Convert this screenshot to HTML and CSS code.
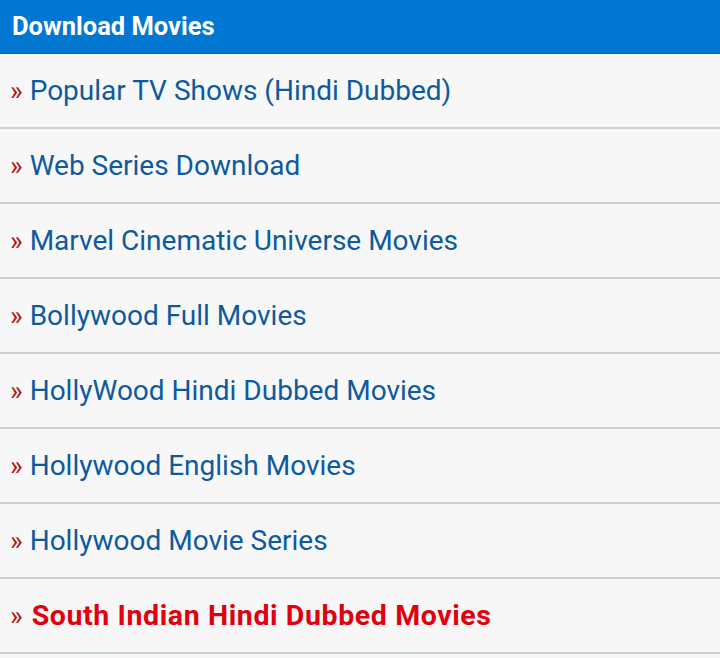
FILE: index.html
```html
<!DOCTYPE html>
<html>
    <head>
        <title>Download Movies</title>
        <meta charset="utf-8" />
        <meta name="viewport" content="width=device-width, initial-scale=1.0">
        <link rel="stylesheet" href="styles.css">
    </head>
    <body>
        <div class="widget">
            <h2 class="widget-title">Download Movies</h2>
            <ul class="cat-list">
                <li><a href="#">Popular TV Shows (Hindi Dubbed)</a></li>
                <li><a href="#">Web Series Download</a></li>
                <li><a href="#">Marvel Cinematic Universe Movies</a></li>
                <li><a href="#">Bollywood Full Movies</a></li>
                <li><a href="#">HollyWood Hindi Dubbed Movies</a></li>
                <li><a href="#">Hollywood English Movies</a></li>
                <li><a href="#">Hollywood Movie Series</a></li>
                <li class="hot"><a href="#">South Indian Hindi Dubbed Movies</a></li>
            </ul>
        </div>
    </body>
</html>
```

FILE: styles.css
```css
body {
    margin: 0;
    font-family: "Roboto", "Liberation Sans", sans-serif;
    background: #f7f7f7;
}

.widget-title {
    margin: 0;
    height: 53px;
    padding: 0 12px;
    line-height: 52px;
    font-size: 25.5px;
    font-weight: bold;
    color: #fff;
    background: #0277d2;
    border-bottom: 1px solid #0563a8;
}

.cat-list {
    list-style: none;
    margin: 0;
    padding: 0;
}

.cat-list li {
    height: 73px;
    display: flex;
    align-items: center;
    padding-left: 10px;
    border-bottom: 2px solid #cfcfcf;
    font-size: 28px;
}

.cat-list li::before {
    content: "\00bb";
    color: #b01818;
    margin-right: 7px;
    font-size: 27px;
}

.cat-list a {
    color: #0e5a9e;
    text-decoration: none;
}

.cat-list li.hot a {
    margin-left: 2px;
    font-size: 28.5px;
    color: #e00010;
    font-weight: bold;
    letter-spacing: 0.6px;
}
```
